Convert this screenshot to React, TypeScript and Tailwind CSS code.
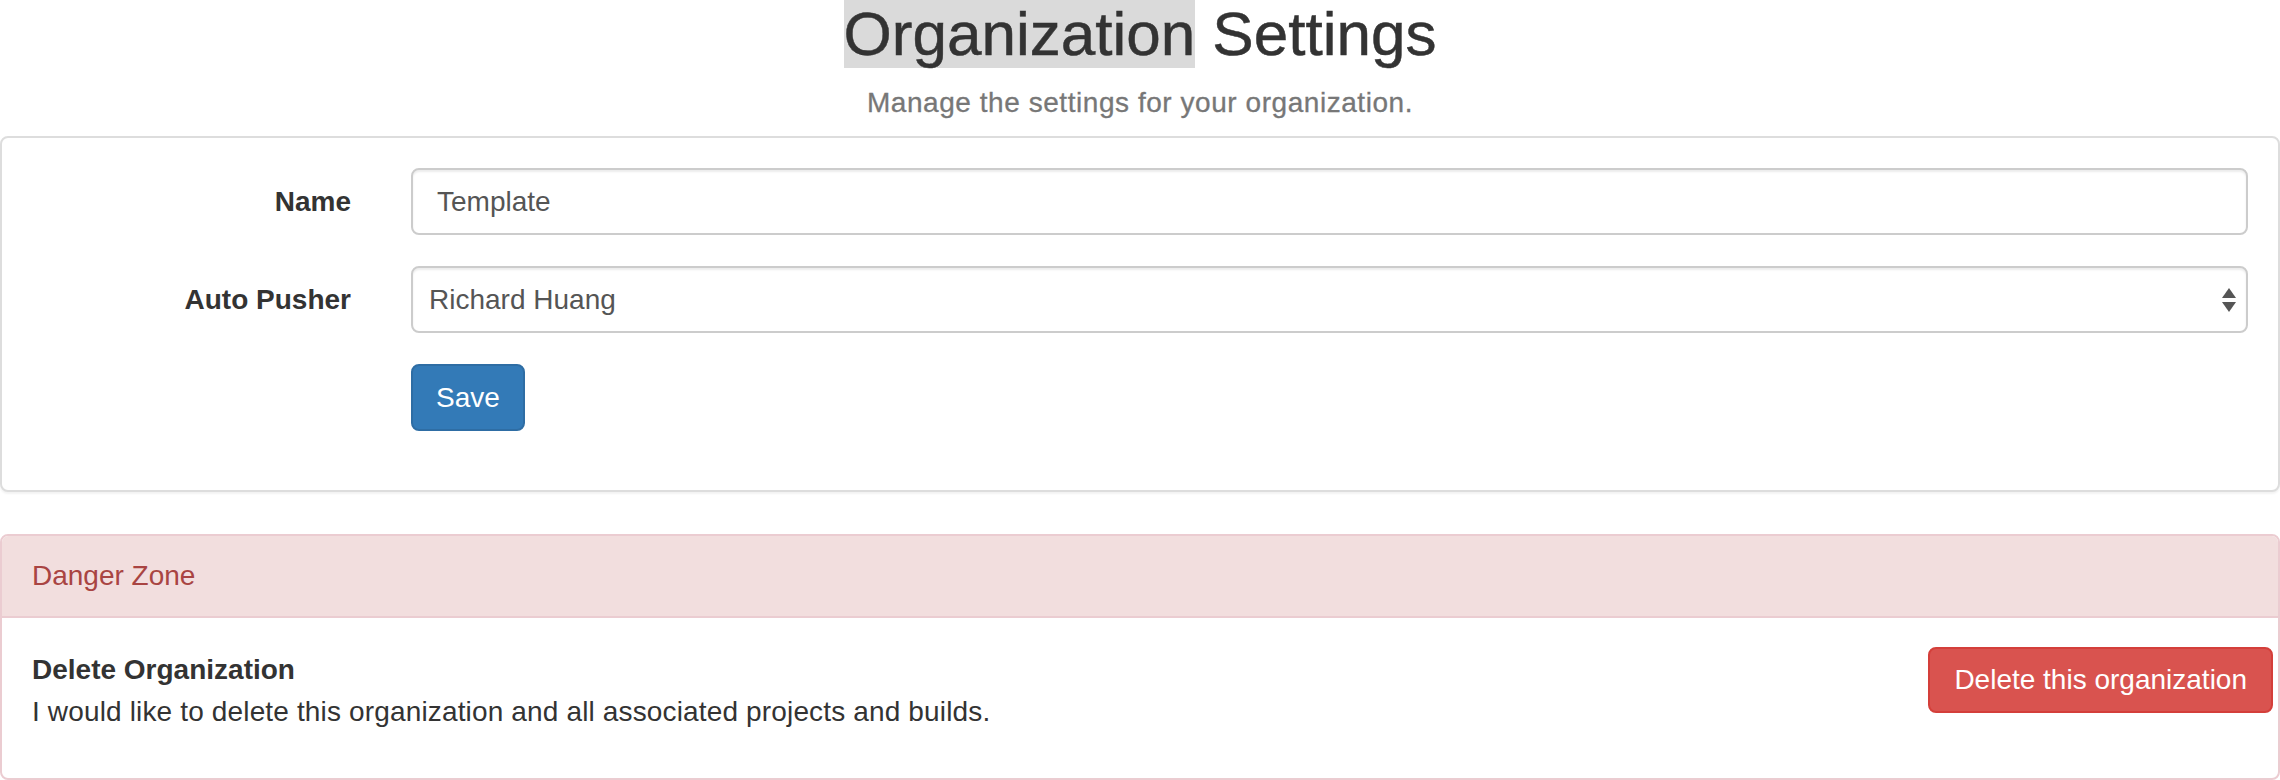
export default function App() {
  return (
    <div className="w-[2280px] min-h-[780px] bg-white font-['Liberation_Sans',Arial,sans-serif] text-[28px] leading-[40px] text-[#333]">
      <h2 className="text-center text-[62px] leading-[67px] font-normal text-[#333] [-webkit-text-stroke:0.5px_#333]">
        <span className="bg-[#dadada]">Organization</span> Settings
      </h2>
      <p className="mt-[16px] text-center tracking-[0.55px] text-[#777] [-webkit-text-stroke:0.3px_#777]">Manage the settings for your organization.</p>

      <div className="mt-[13px] rounded-[8px] border-2 border-[#ddd] bg-white px-[30px] pt-[30px] pb-[59px] shadow-[0_2px_2px_rgba(0,0,0,0.05)]">
        <div className="flex flex-col gap-[31px]">
          <div className="flex items-center">
            <label className="w-[319px] text-right font-bold">Name</label>
            <div className="ml-[60px] flex h-[67px] flex-1 items-center rounded-[8px] border-2 border-[#ccc] px-[24px] text-[#555] shadow-[inset_0_2px_2px_rgba(0,0,0,0.075)]">
              Template
            </div>
          </div>
          <div className="flex items-center">
            <label className="w-[319px] text-right font-bold">Auto Pusher</label>
            <div className="ml-[60px] flex h-[67px] flex-1 items-center justify-between rounded-[8px] border-2 border-[#ccc] pl-[16px] pr-[9px] text-[#555] shadow-[inset_0_2px_2px_rgba(0,0,0,0.075)]">
              <span>Richard Huang</span>
              <svg width="16" height="28" viewBox="0 0 16 28" className="text-[#555]">
                <path d="M8 2 L15 12 L1 12 Z" fill="currentColor" />
                <path d="M1 16 L15 16 L8 26 Z" fill="currentColor" />
              </svg>
            </div>
          </div>
          <div className="flex items-center">
            <div className="w-[319px]" />
            <button className="ml-[60px] h-[67px] rounded-[8px] border-2 border-[#2e6da4] bg-[#337ab7] px-[23px] text-white">
              Save
            </button>
          </div>
        </div>
      </div>

      <div className="mt-[42px] rounded-[8px] border-2 border-[#ebccd1] bg-white">
        <div className="rounded-t-[6px] border-b-2 border-[#ebccd1] bg-[#f2dede] px-[30px] py-[20px] text-[#a94442]">
          Danger Zone
        </div>
        <div className="flex items-start justify-between px-[30px] pt-[32px] pb-[26px]">
          <div>
            <div className="font-bold">Delete Organization</div>
            <p className="mt-[2px] mb-[20px] tracking-[0.15px]">I would like to delete this organization and all associated projects and builds.</p>
          </div>
          <button className="-mt-[3px] -mr-[25px] h-[66px] rounded-[8px] border-2 border-[#d43f3a] bg-[#d9534f] px-[24px] text-white">
            Delete this organization
          </button>
        </div>
      </div>
    </div>
  );
}
